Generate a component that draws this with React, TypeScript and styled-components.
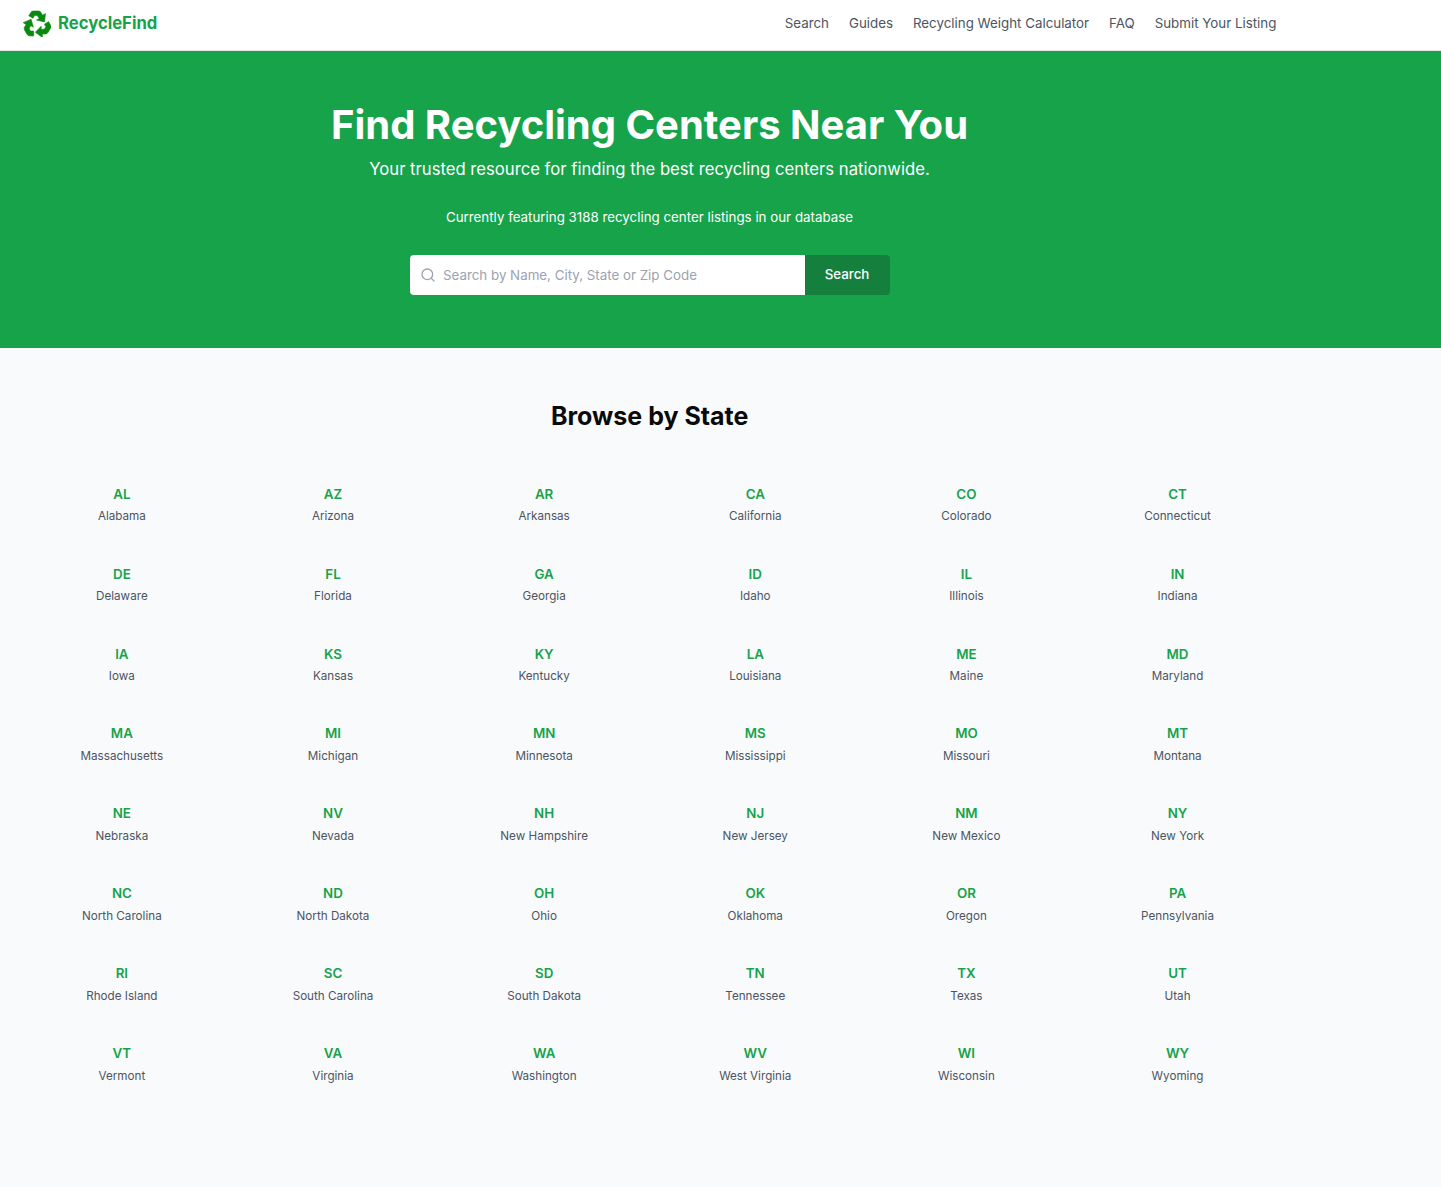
import styled, { createGlobalStyle } from 'styled-components';

const states: [string, string][] = [
  ['AL', 'Alabama'], ['AZ', 'Arizona'], ['AR', 'Arkansas'], ['CA', 'California'], ['CO', 'Colorado'], ['CT', 'Connecticut'],
  ['DE', 'Delaware'], ['FL', 'Florida'], ['GA', 'Georgia'], ['ID', 'Idaho'], ['IL', 'Illinois'], ['IN', 'Indiana'],
  ['IA', 'Iowa'], ['KS', 'Kansas'], ['KY', 'Kentucky'], ['LA', 'Louisiana'], ['ME', 'Maine'], ['MD', 'Maryland'],
  ['MA', 'Massachusetts'], ['MI', 'Michigan'], ['MN', 'Minnesota'], ['MS', 'Mississippi'], ['MO', 'Missouri'], ['MT', 'Montana'],
  ['NE', 'Nebraska'], ['NV', 'Nevada'], ['NH', 'New Hampshire'], ['NJ', 'New Jersey'], ['NM', 'New Mexico'], ['NY', 'New York'],
  ['NC', 'North Carolina'], ['ND', 'North Dakota'], ['OH', 'Ohio'], ['OK', 'Oklahoma'], ['OR', 'Oregon'], ['PA', 'Pennsylvania'],
  ['RI', 'Rhode Island'], ['SC', 'South Carolina'], ['SD', 'South Dakota'], ['TN', 'Tennessee'], ['TX', 'Texas'], ['UT', 'Utah'],
  ['VT', 'Vermont'], ['VA', 'Virginia'], ['WA', 'Washington'], ['WV', 'West Virginia'], ['WI', 'Wisconsin'], ['WY', 'Wyoming'],
];

const navLinks = ['Search', 'Guides', 'Recycling Weight Calculator', 'FAQ', 'Submit Your Listing'];

const GlobalStyle = createGlobalStyle`
  html, body {
    margin: 0;
    padding: 0;
    background: #f9fafb;
    font-family: 'Inter', 'Liberation Sans', sans-serif;
  }
  * {
    box-sizing: border-box;
  }
`;

const Page = styled.div`
  width: 1441px;
  min-height: 1187px;
  background: #f9fafb;
`;

const Header = styled.header`
  height: 51px;
  background: #fff;
  border-bottom: 1px solid #e5e7eb;
`;

const HeaderInner = styled.div`
  width: 1300px;
  height: 46px;
  padding: 0 23.6px 0 23px;
  display: flex;
  align-items: center;
  justify-content: space-between;
`;

const Logo = styled.a`
  display: flex;
  align-items: center;
  gap: 7px;
  color: #16a34a;
  font-size: 16.67px;
  font-weight: 700;
  line-height: 28px;
  svg {
    color: #078a0e;
  }
`;

const Nav = styled.nav`
  display: flex;
  gap: 20px;
`;

const NavLink = styled.a`
  color: #4b5563;
  font-size: 13.33px;
  line-height: 20px;
`;

const Hero = styled.section`
  height: 297px;
  background: #16a34a;
  color: #fff;
`;

const HeroInner = styled.div`
  width: 1299px;
  padding-top: 48px;
  display: flex;
  flex-direction: column;
  align-items: center;
  text-align: center;
`;

const HeroTitle = styled.h1`
  margin: 0;
  font-size: 40px;
  font-weight: 700;
  line-height: 52px;
`;

const HeroSubtitle = styled.p`
  margin: 4px 0 0;
  font-size: 16.67px;
  line-height: 28px;
`;

const HeroCount = styled.p`
  margin: 24px 0 0;
  font-size: 13.33px;
  font-weight: 400;
  line-height: 20px;
`;

const SearchForm = styled.form`
  width: 480px;
  height: 40px;
  margin-top: 28px;
  display: flex;
  border-radius: 4px;
  overflow: hidden;
`;

const SearchField = styled.div`
  flex: 1;
  display: flex;
  align-items: center;
  gap: 7px;
  padding-left: 10.5px;
  background: #fff;
  color: #9ca3af;
  font-size: 13.33px;
`;

const SearchButton = styled.button`
  width: 85px;
  border: 0;
  padding: 0 0 2px;
  background: #15803d;
  color: #fff;
  font-family: inherit;
  font-size: 13.33px;
  font-weight: 500;
`;

const Browse = styled.main`
  width: 1299px;
  padding: 48px 25.9px 0 26.3px;
`;

const BrowseTitle = styled.h2`
  margin: 0;
  text-align: center;
  color: #0a0a0a;
  font-size: 25px;
  font-weight: 700;
  line-height: 40px;
`;

const StateGrid = styled.div`
  margin-top: 39.75px;
  display: grid;
  grid-template-columns: repeat(6, 1fr);
  column-gap: 20px;
  row-gap: 24px;
`;

const StateCard = styled.a`
  height: 55.9px;
  padding-top: 8px;
  display: flex;
  flex-direction: column;
  align-items: center;
`;

const StateCode = styled.span`
  color: #16a34a;
  font-size: 13.33px;
  font-weight: 600;
  line-height: 20px;
`;

const StateName = styled.span`
  margin-top: 2.6px;
  color: #4b5563;
  font-size: 11.67px;
  line-height: 20px;
`;

const SearchIcon = () => (
  <svg width="16" height="16" viewBox="0 0 24 24" fill="none" stroke="currentColor" strokeWidth="2" strokeLinecap="round" strokeLinejoin="round">
    <circle cx="11" cy="11" r="8" />
    <path d="m21 21-4.3-4.3" />
  </svg>
);

// one of the three chasing arrows, the other two are this one rotated
const arrowPath = 'M5.8 6.8 8 3.2Q8.8 2 10.2 2H15.5Q17 2 17.8 3.2L19.5 6.2 22.5 4.5 21.5 13 13.5 11 16.3 9.4 14.2 6.6H11.5L10 9.2Z';

const RecycleLogo = () => (
  <svg width="28" height="28" viewBox="0 0 28 28" fill="currentColor" stroke="currentColor" strokeWidth="0.6" strokeLinejoin="round">
    {[0, 120, 240].map((angle) => (
      <path key={angle} d={arrowPath} transform={`rotate(${angle} 14 15.5)`} />
    ))}
  </svg>
);

export default function App() {
  return (
    <Page>
      <GlobalStyle />
      <Header>
        <HeaderInner>
          <Logo>
            <RecycleLogo />
            RecycleFind
          </Logo>
          <Nav>
            {navLinks.map((link) => (
              <NavLink key={link}>{link}</NavLink>
            ))}
          </Nav>
        </HeaderInner>
      </Header>
      <Hero>
        <HeroInner>
          <HeroTitle>Find Recycling Centers Near You</HeroTitle>
          <HeroSubtitle>Your trusted resource for finding the best recycling centers nationwide.</HeroSubtitle>
          <HeroCount>Currently featuring 3188 recycling center listings in our database</HeroCount>
          <SearchForm>
            <SearchField>
              <SearchIcon />
              Search by Name, City, State or Zip Code
            </SearchField>
            <SearchButton type="button">Search</SearchButton>
          </SearchForm>
        </HeroInner>
      </Hero>
      <Browse>
        <BrowseTitle>Browse by State</BrowseTitle>
        <StateGrid>
          {states.map(([code, name]) => (
            <StateCard key={code}>
              <StateCode>{code}</StateCode>
              <StateName>{name}</StateName>
            </StateCard>
          ))}
        </StateGrid>
      </Browse>
    </Page>
  );
}
